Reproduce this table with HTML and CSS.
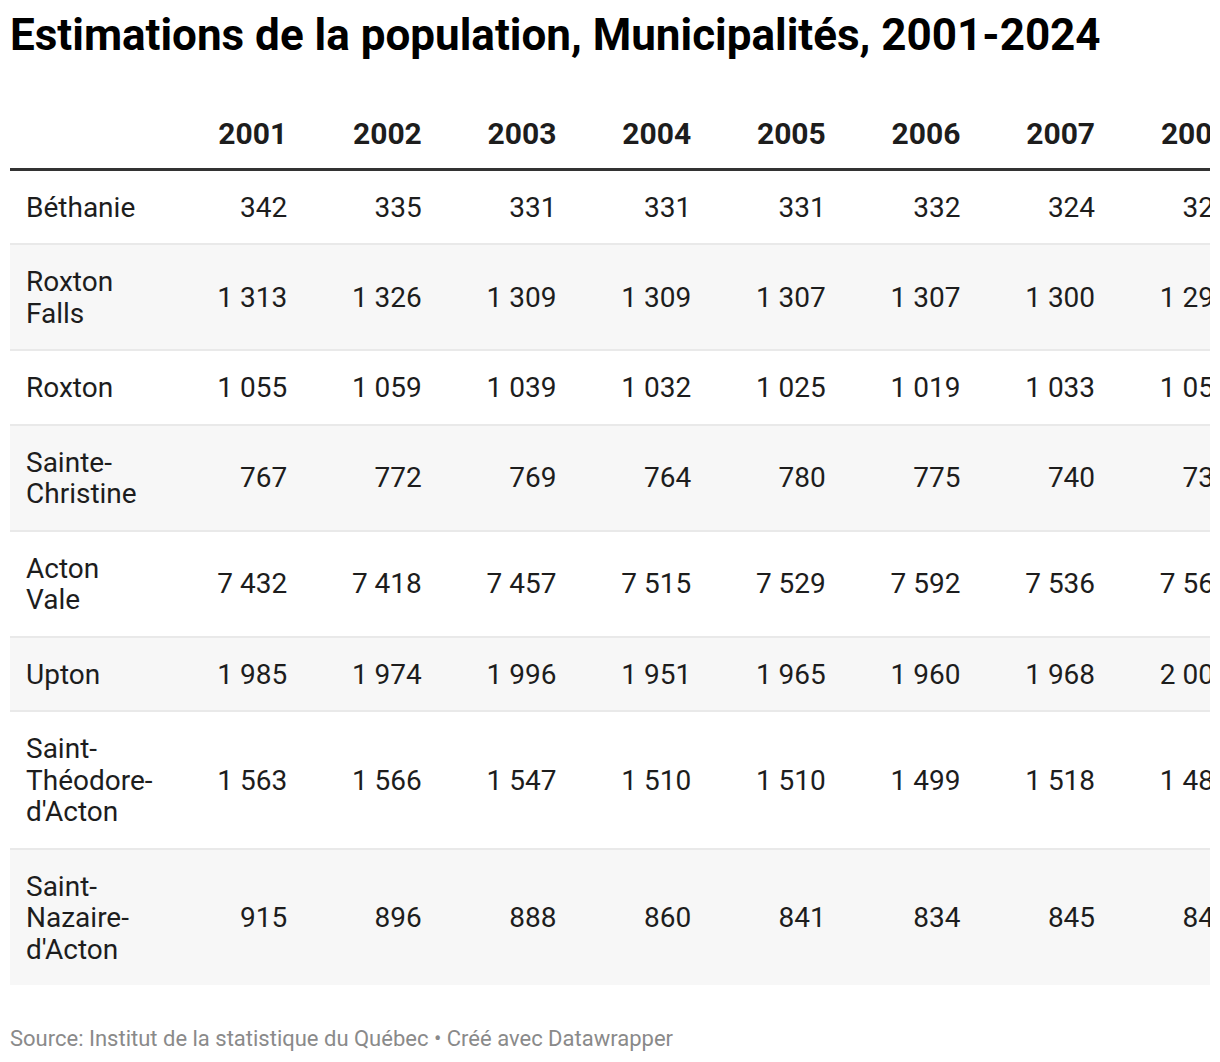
FILE: index.html
```html
<!DOCTYPE html>
<html lang="fr">
<head>
<meta charset="utf-8">
<title>Estimations de la population, Municipalités, 2001-2024</title>
<link rel="stylesheet" href="styles.css">
</head>
<body>
<div class="chart">
  <h1 class="title">Estimations de la population, Municipalités, 2001-2024</h1>
  <div class="table-wrap">
    <table class="data">
      <colgroup>
        <col class="c-name">
        <col class="c-num"><col class="c-num"><col class="c-num"><col class="c-num"><col class="c-num"><col class="c-num">
        <col class="c-num"><col class="c-num"><col class="c-num"><col class="c-num"><col class="c-num"><col class="c-num">
      </colgroup>
      <thead>
        <tr>
          <th class="name"></th>
          <th>2001</th><th>2002</th><th>2003</th><th>2004</th><th>2005</th><th>2006</th>
          <th>2007</th><th>2008</th><th>2009</th><th>2010</th><th>2011</th><th>2012</th>
        </tr>
      </thead>
      <tbody>
        <tr><td class="name">Béthanie</td><td>342</td><td>335</td><td>331</td><td>331</td><td>331</td><td>332</td><td>324</td><td>324</td><td>323</td><td>322</td><td>321</td><td>320</td></tr>
        <tr><td class="name">Roxton Falls</td><td>1 313</td><td>1 326</td><td>1 309</td><td>1 309</td><td>1 307</td><td>1 307</td><td>1 300</td><td>1 293</td><td>1 290</td><td>1 288</td><td>1 285</td><td>1 280</td></tr>
        <tr><td class="name">Roxton</td><td>1 055</td><td>1 059</td><td>1 039</td><td>1 032</td><td>1 025</td><td>1 019</td><td>1 033</td><td>1 050</td><td>1 052</td><td>1 054</td><td>1 056</td><td>1 058</td></tr>
        <tr><td class="name">Sainte-Christine</td><td>767</td><td>772</td><td>769</td><td>764</td><td>780</td><td>775</td><td>740</td><td>735</td><td>730</td><td>728</td><td>726</td><td>724</td></tr>
        <tr><td class="name">Acton Vale</td><td>7 432</td><td>7 418</td><td>7 457</td><td>7 515</td><td>7 529</td><td>7 592</td><td>7 536</td><td>7 560</td><td>7 580</td><td>7 600</td><td>7 620</td><td>7 640</td></tr>
        <tr><td class="name">Upton</td><td>1 985</td><td>1 974</td><td>1 996</td><td>1 951</td><td>1 965</td><td>1 960</td><td>1 968</td><td>2 005</td><td>2 010</td><td>2 015</td><td>2 020</td><td>2 025</td></tr>
        <tr><td class="name">Saint-Théodore-d'Acton</td><td>1 563</td><td>1 566</td><td>1 547</td><td>1 510</td><td>1 510</td><td>1 499</td><td>1 518</td><td>1 480</td><td>1 485</td><td>1 490</td><td>1 495</td><td>1 500</td></tr>
        <tr><td class="name">Saint-Nazaire-d'Acton</td><td>915</td><td>896</td><td>888</td><td>860</td><td>841</td><td>834</td><td>845</td><td>840</td><td>838</td><td>836</td><td>834</td><td>832</td></tr>
      </tbody>
    </table>
  </div>
  <p class="footer">Source: Institut de la statistique du Québec • Créé avec Datawrapper</p>
</div>
</body>
</html>
```

FILE: styles.css
```css
html, body {
  margin: 0;
  padding: 0;
  background: #ffffff;
}

body {
  font-family: Roboto, "Liberation Sans", Arial, sans-serif;
  color: #1d1d1d;
}

.chart {
  padding: 9px 10px 10px;
  width: 1200px;
}

.title {
  margin: 0;
  font-size: 44px;
  line-height: 52px;
  font-weight: 700;
  color: #000000;
}

.table-wrap {
  width: 1200px;
  overflow: hidden;
  margin-top: 57px;
}

.data {
  border-collapse: collapse;
  table-layout: fixed;
  width: 1768px;
  font-size: 28px;
  line-height: 31.75px;
}

.c-name { width: 152px; }
.c-num { width: 134.67px; }

.data th,
.data td {
  text-align: right;
  padding: 0 9.5px 0 0;
  white-space: nowrap;
}

.data th.name,
.data td.name {
  text-align: left;
  padding-left: 16px;
  padding-right: 7px;
  white-space: normal;
}

.data thead th {
  font-size: 30px;
  line-height: 32px;
  font-weight: 700;
  color: #1d1d1d;
  padding-bottom: 18px;
  border-bottom: 3px solid #333333;
  vertical-align: bottom;
}

.data tbody td {
  padding-top: 21px;
  padding-bottom: 19.5px;
  vertical-align: middle;
}

.data tbody tr {
  border-bottom: 2px solid #e9e9e9;
}

.data tbody tr:last-child {
  border-bottom: none;
}

.data tbody tr:nth-child(even) {
  background: #f7f7f7;
}

.footer {
  margin: 40px 0 0;
  font-size: 22px;
  line-height: 28px;
  color: #8a8a8a;
}
```
